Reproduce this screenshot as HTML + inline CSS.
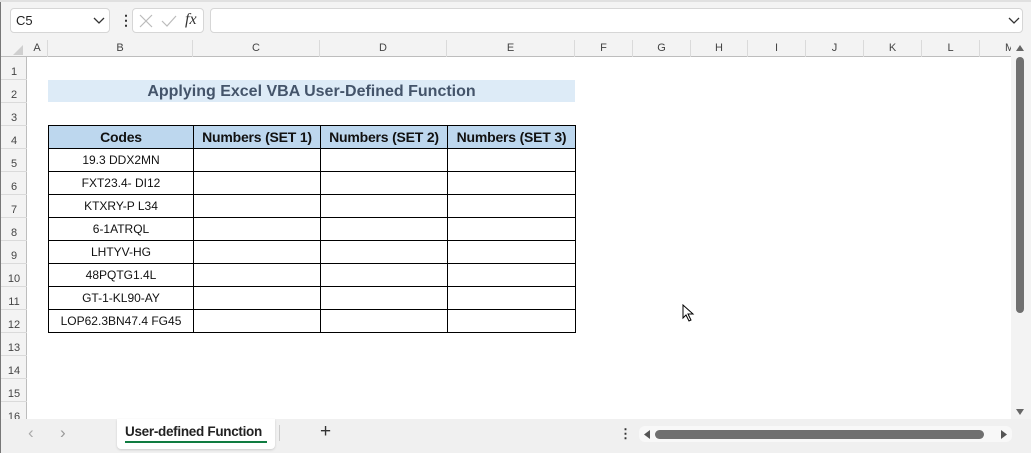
<!DOCTYPE html>
<html><head><meta charset="utf-8"><style>
*{margin:0;padding:0;box-sizing:border-box}
body{width:1031px;height:453px;overflow:hidden;background:#f3f3f3;font-family:"Liberation Sans",sans-serif;position:relative}
.abs{position:absolute}
.box{background:#fff;border:1px solid #d6d6d6;border-radius:4px}
.colh{position:absolute;top:40px;height:17px;font-size:11px;color:#444;text-align:center;line-height:17px;border-right:1px solid #dadada}
.rowh{position:absolute;left:1px;width:26px;height:23px;font-size:11px;color:#444;text-align:center;line-height:30px;border-bottom:1px solid #dadada}
table{position:absolute;left:48px;top:125px;width:527px;table-layout:fixed;border-collapse:collapse;font-family:"Liberation Sans",sans-serif}
td{border:1px solid #000;height:23px;font-size:12px;text-align:center;color:#111;padding:0;white-space:nowrap}
th{border:1px solid #000;height:23px;background:#bdd7ee;font-size:14px;font-weight:bold;color:#111;padding:0;white-space:nowrap;letter-spacing:-0.2px}
</style></head><body>
<div class="abs" style="left:0;top:0;width:1px;height:453px;background:#777"></div>
<div class="abs" style="left:0;top:0;width:1031px;height:2px;background:#e0e0e0"></div>
<div class="abs box" style="left:10px;top:8px;width:100px;height:25px;font-size:13px;line-height:23px;padding-left:5px;color:#222">C5
<svg class="abs" style="left:82px;top:8px" width="12" height="8"><path d="M1 1 L6 6 L11 1" stroke="#333" fill="none" stroke-width="1.3"/></svg></div>
<div class="abs" style="left:119px;top:13px;width:3px;height:15px;font-size:14px;line-height:14px;color:#333;font-weight:bold">⋮</div>
<div class="abs box" style="left:132px;top:8px;width:72px;height:25px">
<svg class="abs" style="left:5px;top:5px" width="40" height="14"><path d="M2 1 L14 13 M14 1 L2 13" stroke="#bbb" stroke-width="1.2"/><path d="M24 7 L29 12 L38 2" stroke="#bbb" fill="none" stroke-width="1.2"/></svg>
<span class="abs" style="left:52px;top:2px;font-family:'Liberation Serif',serif;font-style:italic;font-size:16px;color:#333">fx</span></div>
<div class="abs box" style="left:210px;top:8px;width:813px;height:25px">
<svg class="abs" style="left:797px;top:8px" width="12" height="8"><path d="M1 1 L6 6 L11 1" stroke="#333" fill="none" stroke-width="1.3"/></svg></div>
<div class="abs" style="left:1px;top:40px;width:1010px;height:379px;background:#fff"></div>
<div class="abs" style="left:1px;top:40px;width:1010px;height:17px;background:#f3f3f3;border-bottom:1px solid #bdbdbd"></div>
<div class="abs" style="left:1px;top:57px;width:26px;height:362px;background:#f3f3f3;border-right:1px solid #bdbdbd"></div>
<svg class="abs" style="left:12px;top:44px" width="12" height="12"><path d="M11 1 L11 11 L1 11 Z" fill="#cfcfcf"/></svg>
<div class="colh" style="left:27px;width:21px">A</div>
<div class="colh" style="left:48px;width:145px">B</div>
<div class="colh" style="left:193px;width:127px">C</div>
<div class="colh" style="left:320px;width:127px">D</div>
<div class="colh" style="left:447px;width:128px">E</div>
<div class="colh" style="left:575px;width:58px">F</div>
<div class="colh" style="left:633px;width:58px">G</div>
<div class="colh" style="left:691px;width:57px">H</div>
<div class="colh" style="left:748px;width:58px">I</div>
<div class="colh" style="left:806px;width:58px">J</div>
<div class="colh" style="left:864px;width:58px">K</div>
<div class="colh" style="left:922px;width:58px">L</div>
<div class="colh" style="left:980px;width:30px;text-align:left;padding-left:25px;border:none">M</div>
<div class="rowh" style="top:57px">1</div><div class="rowh" style="top:80px">2</div><div class="rowh" style="top:103px">3</div><div class="rowh" style="top:126px">4</div><div class="rowh" style="top:149px">5</div><div class="rowh" style="top:172px">6</div><div class="rowh" style="top:195px">7</div><div class="rowh" style="top:218px">8</div><div class="rowh" style="top:241px">9</div><div class="rowh" style="top:264px">10</div><div class="rowh" style="top:287px">11</div><div class="rowh" style="top:310px">12</div><div class="rowh" style="top:333px">13</div><div class="rowh" style="top:356px">14</div><div class="rowh" style="top:379px">15</div><div class="rowh" style="top:402px;height:17px;border:none">16</div>
<div class="abs" style="left:48px;top:80px;width:527px;height:22px;background:#ddebf7;text-align:center;font-weight:bold;font-size:16px;line-height:23px;color:#44546a">Applying Excel VBA User-Defined Function</div>
<table>
<colgroup><col style="width:145px"><col style="width:127px"><col style="width:127px"><col style="width:128px"></colgroup>
<tr><th>Codes</th><th>Numbers (SET 1)</th><th>Numbers (SET 2)</th><th>Numbers (SET 3)</th></tr>
<tr><td>19.3 DDX2MN</td><td></td><td></td><td></td></tr>
<tr><td>FXT23.4- DI12</td><td></td><td></td><td></td></tr>
<tr><td>KTXRY-P L34</td><td></td><td></td><td></td></tr>
<tr><td>6-1ATRQL</td><td></td><td></td><td></td></tr>
<tr><td>LHTYV-HG</td><td></td><td></td><td></td></tr>
<tr><td>48PQTG1.4L</td><td></td><td></td><td></td></tr>
<tr><td>GT-1-KL90-AY</td><td></td><td></td><td></td></tr>
<tr><td>LOP62.3BN47.4 FG45</td><td></td><td></td><td></td></tr>
</table>
<svg class="abs" style="left:682px;top:304px" width="14" height="20"><path d="M1 1 L1 14 L4 11 L7 17 L9 16 L6 10 L11 10 Z" fill="#fff" stroke="#000" stroke-width="1"/></svg>
<div class="abs" style="left:1011px;top:40px;width:20px;height:379px;background:#f3f3f3"></div>
<svg class="abs" style="left:1015px;top:44px" width="10" height="8"><path d="M1 7 L5 1 L9 7 Z" fill="#666"/></svg>
<div class="abs" style="left:1016px;top:57px;width:8px;height:256px;background:#707070;border-radius:4px"></div>
<svg class="abs" style="left:1015px;top:408px" width="10" height="8"><path d="M1 1 L5 7 L9 1 Z" fill="#666"/></svg>
<div class="abs" style="left:1px;top:419px;width:1030px;height:34px;background:#f0f0f0"></div>
<span class="abs" style="left:28px;top:423px;font-size:17px;color:#aaa">‹</span>
<span class="abs" style="left:60px;top:423px;font-size:17px;color:#999">›</span>
<div class="abs" style="left:117px;top:419px;width:158px;height:30px;background:#fff;border-radius:0 0 4px 4px;box-shadow:0 1px 2px #ccc"></div>
<div class="abs" style="left:125px;top:424px;font-size:13.5px;font-weight:bold;color:#222;letter-spacing:-0.3px">User-defined Function</div>
<div class="abs" style="left:125px;top:441px;width:142px;height:2px;background:#107c41"></div>
<div class="abs" style="left:279px;top:425px;width:1px;height:16px;background:#ccc"></div>
<span class="abs" style="left:320px;top:421px;font-size:19px;color:#333">+</span>
<span class="abs" style="left:619px;top:426px;font-size:13px;font-weight:bold;color:#333">⋮</span>
<div class="abs" style="left:639px;top:426px;width:373px;height:16px;background:#f8f8f8;border-radius:6px"></div>
<svg class="abs" style="left:643px;top:430px" width="8" height="9"><path d="M7 0 L1 4.5 L7 9 Z" fill="#555"/></svg>
<div class="abs" style="left:655px;top:430px;width:329px;height:9px;background:#707070;border-radius:5px"></div>
<svg class="abs" style="left:1000px;top:430px" width="8" height="9"><path d="M1 0 L7 4.5 L1 9 Z" fill="#555"/></svg>
</body></html>
